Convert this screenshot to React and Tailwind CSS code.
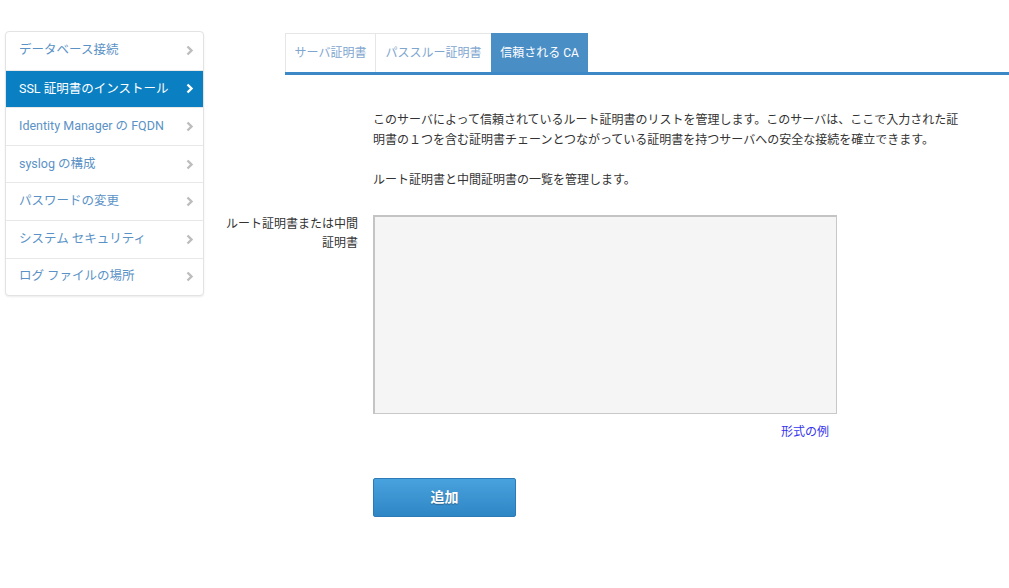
import React from "react";

const items = [
  "データベース接続",
  "SSL 証明書のインストール",
  "Identity Manager の FQDN",
  "syslog の構成",
  "パスワードの変更",
  "システム セキュリティ",
  "ログ ファイルの場所",
];

function Chevron({ active }) {
  return (
    <svg width="8" height="11" viewBox="0 0 8 11" className="shrink-0">
      <path
        d="M1.5 1.5 L5.5 5.5 L1.5 9.5"
        fill="none"
        stroke={active ? "#ffffff" : "#bdbdbd"}
        strokeWidth="2.4"
      />
    </svg>
  );
}

export default function App() {
  const font = { fontFamily: 'Roboto, "Noto Sans CJK JP", sans-serif' };
  return (
    <div className="w-[1009px] h-[588px] bg-white flex" style={font}>
      <div className="pl-[5px] pt-[31px] w-[204px] shrink-0">
        <div className="border border-[#e3e3e3] rounded-[4px] shadow-[0_1px_2px_rgba(0,0,0,0.08)] bg-white overflow-hidden">
          {items.map((t, i) => {
            const active = i === 1;
            return (
              <div
                key={t}
                className={`h-[37.6px] flex items-center justify-between pl-[13px] pr-[9px] text-[12.5px] ${
                  i > 0 ? "border-t border-[#e8e8e8]" : ""
                } ${active ? "bg-[#0a7fc2] text-white" : "text-[#5b92c6]"}`}
              >
                <span>{t}</span>
                <Chevron active={active} />
              </div>
            );
          })}
        </div>
      </div>

      <div className="flex-1 flex flex-col pt-[33px]">
        <div className="flex ml-[81px] border-b-[3px] border-[#3d88c6] h-[42px]">
          <div className="w-[90px] h-[39px] flex items-center justify-center border-l border-t border-[#e6e6e6] text-[12px] text-[#7ea6cf]">
            サーバ証明書
          </div>
          <div className="w-[116px] h-[39px] flex items-center justify-center border-l border-t border-[#e6e6e6] text-[12px] text-[#7ea6cf]">
            パススルー証明書
          </div>
          <div className="w-[97px] h-[39px] flex items-center justify-center bg-[#4a8ec6] text-[12px] text-white">
            信頼される CA
          </div>
        </div>

        <div className="ml-[169px] pt-[35px] w-[590px] text-[12px] leading-[20px] text-[#333333]">
          <p>
            このサーバによって信頼されているルート証明書のリストを管理します。このサーバは、ここで入力された証明書の１つを含む証明書チェーンとつながっている証明書を持つサーバへの安全な接続を確立できます。
          </p>
          <p className="mt-[20px]">ルート証明書と中間証明書の一覧を管理します。</p>
        </div>

        <div className="flex mt-[25px]">
          <div className="ml-[18px] w-[136px] text-right text-[12px] leading-[19px] text-[#333333]">
            ルート証明書または中間証明書
          </div>
          <div className="ml-[15px] flex flex-col">
            <div className="w-[464px] h-[199px] bg-[#f5f5f5] border border-[#c8c8c8] border-t-[2px] border-l-[2px] border-t-[#c4c4c4] border-l-[#c4c4c4]" />
            <div className="w-[464px] flex justify-end pr-[8px] mt-[10px]">
              <span className="text-[12px] text-[#3535ee] leading-[16px]">形式の例</span>
            </div>
            <button className="mt-[38px] w-[143px] h-[39px] rounded-[2px] border border-[#2c7bb8] bg-gradient-to-b from-[#48a2dd] to-[#2f86c5] text-white text-[14px] font-bold [text-shadow:0_1px_1px_rgba(0,0,0,0.3)]">
              追加
            </button>
          </div>
        </div>
      </div>
    </div>
  );
}
